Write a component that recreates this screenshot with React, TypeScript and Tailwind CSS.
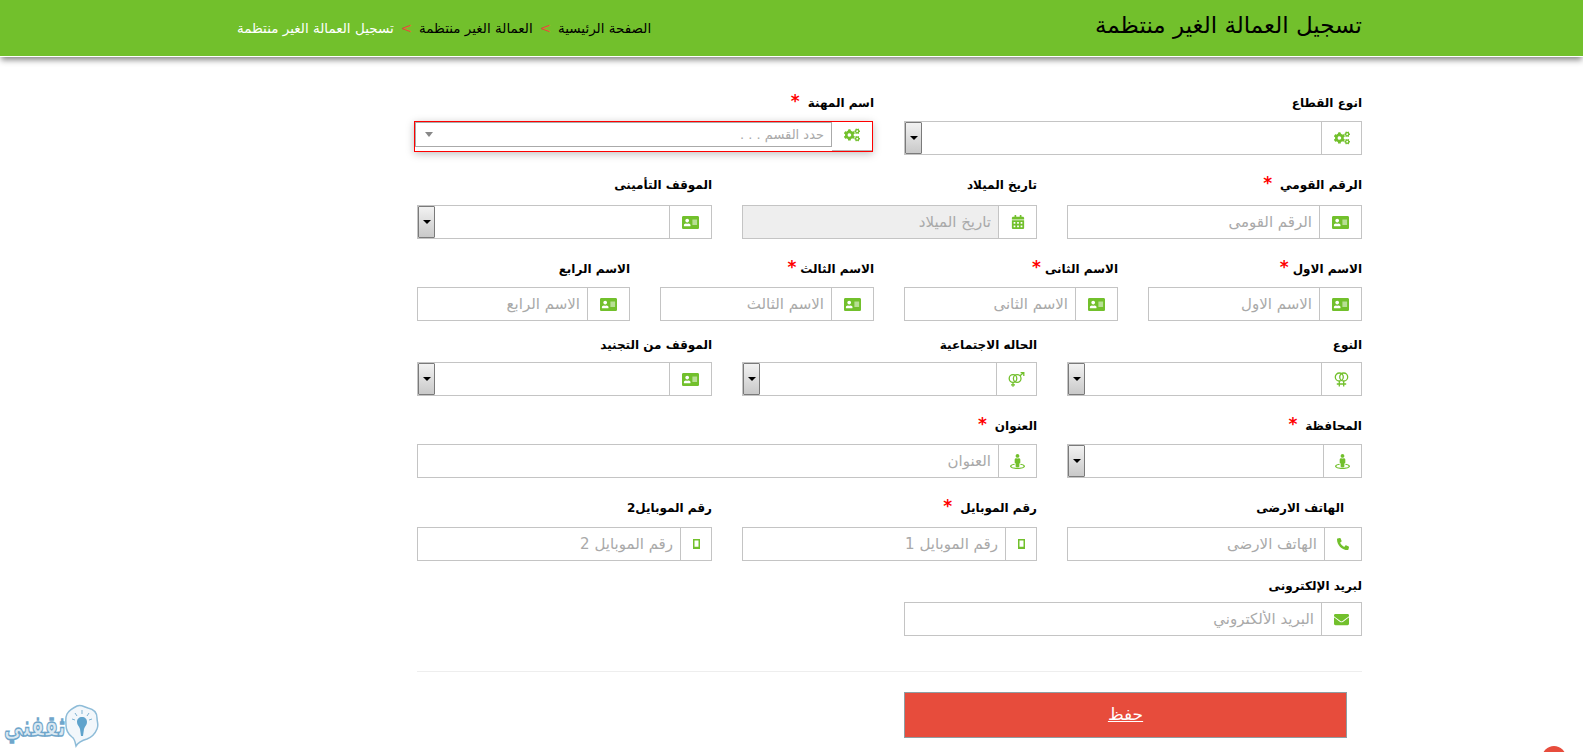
import React from "react"
import { FaAddressCard, FaCalendarAlt, FaCogs, FaEnvelope, FaPhoneAlt, FaStreetView } from "react-icons/fa"

const border = "border border-[#c4c4c4]"

function VenusDouble() {
    return (
        <svg width="15" height="15" viewBox="0 0 15 15" fill="none" stroke="currentColor" strokeWidth="1.3">
            <circle cx="5.3" cy="5" r="4" />
            <circle cx="9.7" cy="5" r="4" />
            <path d="M5.3 9v5.5M9.7 9v5.5M2.8 12h4.8M7.4 12h4.8" />
        </svg>
    )
}

function VenusMars() {
    return (
        <svg width="17" height="15" viewBox="0 0 17 15" fill="none" stroke="currentColor" strokeWidth="1.3">
            <circle cx="5" cy="6.5" r="3.8" />
            <circle cx="9.2" cy="6.5" r="3.8" />
            <path d="M5 10.3v4.5M3 12.8h4M12 3.8l3.5-3M12.6 0.7h3.2v3.2" />
        </svg>
    )
}

function Mobile() {
    return (
        <svg width="7" height="10" viewBox="0 0 7 10" fill="none" stroke="currentColor">
            <rect x="0.75" y="0.75" width="5.5" height="8.5" strokeWidth="1.5" />
            <path d="M0 8.5h7" strokeWidth="1.5" />
        </svg>
    )
}

function Addon({ icon, className }: { icon: React.ReactNode; className: string }) {
    return (
        <span className={`flex shrink-0 items-center justify-center border-l border-[#c4c4c4] text-[#72c02c] ${className}`}>
            {icon}
        </span>
    )
}

function Label({ text, star, gap, className = "" }: { text: string; star?: boolean; gap?: string; className?: string }) {
    return (
        <label className={`mb-2 flex h-5 items-center text-[12px] font-bold text-black ${className}`}>
            {text}
            {star && <span className={`relative -top-[2px] text-[17px] leading-none text-[#ff0000] ${gap ?? "mr-2"}`}>*</span>}
        </label>
    )
}

function TextField({ placeholder, icon, addon = "w-[42px]", disabled }: { placeholder: string; icon: React.ReactNode; addon?: string; disabled?: boolean }) {
    return (
        <div className={`flex h-[34px] ${border}`}>
            <Addon icon={icon} className={addon} />
            <input
                disabled={disabled}
                placeholder={placeholder}
                className={`h-full min-w-0 flex-1 px-[7px] text-[15px] outline-none placeholder:text-[#a9a9a9] ${disabled ? "bg-[#eeeeee]" : "bg-white"}`}
            />
        </div>
    )
}

function SelectField({ icon, addon = "w-[42px]" }: { icon: React.ReactNode; addon?: string }) {
    return (
        <div className={`flex h-[34px] ${border}`}>
            <Addon icon={icon} className={addon} />
            <div className="flex-1" />
            <span className="flex w-[17px] items-center justify-center rounded-[1px] border border-[#7a7a7a] bg-gradient-to-b from-[#f2f2f2] to-[#c9c9c9]">
                <span className="h-0 w-0 border-x-[4px] border-t-[4px] border-x-transparent border-t-black" />
            </span>
        </div>
    )
}

const idCard = <FaAddressCard size={17} />
const cogs = <FaCogs size={16} />
const street = <FaStreetView size={15} />

export default function App() {
    return (
        <div className="relative h-screen overflow-hidden bg-white font-['DejaVu_Sans',sans-serif]" dir="rtl">
            {/* Header */}
            <header className="flex h-[57px] items-center justify-between border-b border-white bg-[#72c02c] pl-[237px] pr-[221px] shadow-[0_4px_6px_-1px_#888888]">
                <h1 className="-mt-[6px] text-[23px] text-black">تسجيل العمالة الغير منتظمة</h1>
                <nav className="flex items-center gap-[7px] text-[13.5px] text-black">
                    <span>الصفحة الرئيسية</span>
                    <span className="text-[#e74c3c]">&gt;</span>
                    <span>العمالة الغير منتظمة</span>
                    <span className="text-[#e74c3c]">&gt;</span>
                    <span className="text-white">تسجيل العمالة الغير منتظمة</span>
                </nav>
            </header>

            {/* Form */}
            <form className="mr-[206px] w-[975px] pt-[36px]">
                <div className="flex">
                    <div className="w-[488px] shrink-0 px-[15px]">
                        <Label text="انوع القطاع" />
                        <SelectField icon={cogs} addon="w-[40px]" />
                    </div>
                    <div className="w-[487px] px-[15px]">
                        <Label text="اسم المهنة" star />
                        <div className="-ml-[3px] mr-[1px] flex h-[31px] border border-[#ff0000] shadow-[0_2px_8px_rgba(0,0,0,0.25)]">
                            <span className="flex w-[40px] shrink-0 items-center justify-center border-b border-[#b5b5b5] pb-[2px] text-[#72c02c]">{cogs}</span>
                            <div className="flex h-[25px] flex-1 items-center justify-between border border-[#aaaaaa] pl-[9px] pr-[7px] text-[13px] text-[#a9a9a9]">
                                <span>حدد القسم . . .</span>
                                <span className="h-0 w-0 border-x-[4px] border-t-[5px] border-x-transparent border-t-[#888888]" />
                            </div>
                        </div>
                    </div>
                </div>

                <div className="mt-[20px] flex">
                    <div className="w-1/3 px-[15px]">
                        <Label text="الرقم القومي" star className="!mb-[10px]" />
                        <TextField placeholder="الرقم القومى" icon={idCard} />
                    </div>
                    <div className="w-1/3 px-[15px]">
                        <Label text="تاريخ الميلاد" className="!mb-[10px]" />
                        <TextField placeholder="تاريخ الميلاد" icon={<FaCalendarAlt size={14} />} addon="w-[38px]" disabled />
                    </div>
                    <div className="w-1/3 px-[15px]">
                        <Label text="الموقف التأمينى" className="!mb-[10px]" />
                        <SelectField icon={idCard} />
                    </div>
                </div>

                <div className="mt-[20px] flex">
                    <div className="w-[244px] shrink-0 px-[15px]">
                        <Label text="الاسم الاول" star gap="mr-1" />
                        <TextField placeholder="الاسم الاول" icon={idCard} />
                    </div>
                    <div className="w-[244px] shrink-0 px-[15px]">
                        <Label text="الاسم الثانى" star gap="mr-1" />
                        <TextField placeholder="الاسم الثانى" icon={idCard} />
                    </div>
                    <div className="w-[244px] shrink-0 px-[15px]">
                        <Label text="الاسم الثالث" star gap="mr-1" />
                        <TextField placeholder="الاسم الثالث" icon={idCard} />
                    </div>
                    <div className="w-[243px] shrink-0 px-[15px]">
                        <Label text="الاسم الرابع" />
                        <TextField placeholder="الاسم الرابع" icon={idCard} />
                    </div>
                </div>

                <div className="mt-[14px] flex">
                    <div className="w-1/3 px-[15px]">
                        <Label text="النوع" className="!mb-[7px]" />
                        <SelectField icon={<VenusDouble />} addon="w-[40px]" />
                    </div>
                    <div className="w-1/3 px-[15px]">
                        <Label text="الحاله الاجتماعية" className="!mb-[7px]" />
                        <SelectField icon={<VenusMars />} addon="w-[40px]" />
                    </div>
                    <div className="w-1/3 px-[15px]">
                        <Label text="الموقف من التجنيد" className="!mb-[7px]" />
                        <SelectField icon={idCard} />
                    </div>
                </div>

                <div className="mt-[20px] flex">
                    <div className="w-1/3 px-[15px]">
                        <Label text="المحافظة" star />
                        <SelectField icon={street} addon="w-[38px]" />
                    </div>
                    <div className="w-2/3 px-[15px]">
                        <Label text="العنوان" star />
                        <TextField placeholder="العنوان" icon={street} addon="w-[38px]" />
                    </div>
                </div>

                <div className="mt-[20px] flex">
                    <div className="w-1/3 px-[15px]">
                        <Label text="الهاتف الارضى" className="!mb-[9px] pr-[18px]" />
                        <TextField placeholder="الهاتف الارضى" icon={<FaPhoneAlt size={12} />} addon="w-[37px]" />
                    </div>
                    <div className="w-1/3 px-[15px]">
                        <Label text="رقم الموبايل" star className="!mb-[9px]" />
                        <TextField placeholder="رقم الموبايل 1" icon={<Mobile />} addon="w-[31px]" />
                    </div>
                    <div className="w-1/3 px-[15px]">
                        <Label text="رقم الموبايل2" className="!mb-[9px]" />
                        <TextField placeholder="رقم الموبايل 2" icon={<Mobile />} addon="w-[31px]" />
                    </div>
                </div>

                <div className="mt-[15px] flex">
                    <div className="w-[488px] px-[15px]">
                        <Label text="لبريد الإلكترونى" className="!mb-[6px]" />
                        <TextField placeholder="البريد الألكتروني" icon={<FaEnvelope size={15} />} addon="w-[40px]" />
                    </div>
                </div>

                <hr className="mx-[15px] mt-[35px] border-t border-[#eeeeee]" />

                <div className="mt-[20px] flex">
                    <div className="flex w-[488px] justify-end px-[15px]">
                        <button type="button" className="h-[46px] w-[443px] shrink-0 border border-[#8f9ea3] bg-[#e74c3c] text-[17px] text-white underline">
                            حفظ
                        </button>
                    </div>
                </div>
            </form>

            {/* Back to top */}
            <span className="absolute left-[1542px] top-[746px] h-6 w-6 rounded-full bg-[#e74c3c]" />

            {/* Logo */}
            <div className="absolute left-[4px] top-[704px] flex items-center gap-[5px]" dir="ltr">
                <span className="w-[56px] origin-center scale-y-[1.5] text-center text-[19px] font-bold leading-none text-[#dbe9f2] [-webkit-text-stroke:1px_#6fa6cb]">ثقفني</span>
                <svg width="34" height="45" viewBox="0 0 34 45" fill="none">
                    <path d="M12 2c4-2 7 1 11 2 5 1 9 4 9 10 0 4 2 7 0 11-2 5-5 8-10 10-4 1-8 2-11 7-1-4-1-7-4-9-4-3-6-7-6-12 0-4-1-7 1-11 2-4 6-6 10-8z" fill="#f2f7fb" stroke="#8ebcd8" strokeWidth="1.5" />
                    <path d="M17 13c-3 0-5 2-5 5 0 3 2 4 3 7l1 7h2l1-7c1-3 3-4 3-7 0-3-2-5-5-5z" fill="#5fa3cc" />
                    <path d="M17 6v4M10 9l2 3M24 9l-2 3M7 15l3 1M27 15l-3 1" stroke="#7fb3d3" strokeWidth="1" />
                </svg>
            </div>
        </div>
    )
}
